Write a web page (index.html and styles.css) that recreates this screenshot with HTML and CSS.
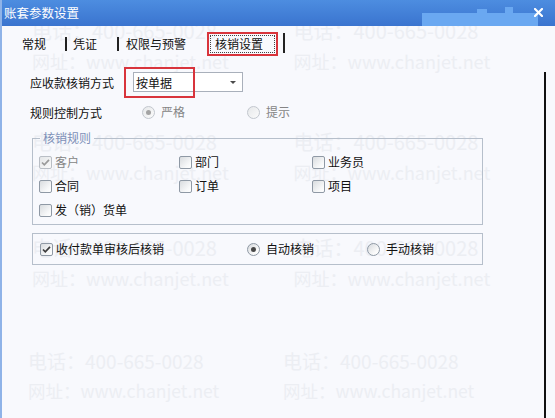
FILE: index.html
```html
<!DOCTYPE html>
<html lang="zh-CN">
<head>
<meta charset="utf-8">
<title>账套参数设置</title>
<link rel="stylesheet" href="styles.css">
</head>
<body>
<div class="window">
  <div class="titlebar">
    <span class="title">账套参数设置</span>
    <span class="blob"><i class="bump b1"></i><i class="bump b2"></i></span>
    <svg class="close" width="9" height="9" viewBox="0 0 9 9"><path d="M1 1 L8 8 M8 1 L1 8" stroke="#fff" stroke-width="2.2" stroke-linecap="square"/></svg>
  </div>

  <div class="wm">
    <div class="band band1">
      <div class="wm-col"><div>电话：400-665-0028</div><div class="url">网址：www.chanjet.net</div></div>
      <div class="wm-col"><div>电话：400-665-0028</div><div class="url">网址：www.chanjet.net</div></div>
    </div>
    <div class="band band2">
      <div class="wm-col"><div>电话：400-665-0028</div><div class="url">网址：www.chanjet.net</div></div>
      <div class="wm-col"><div>电话：400-665-0028</div><div class="url">网址：www.chanjet.net</div></div>
    </div>
    <div class="band band3">
      <div class="wm-col"><div>电话：400-665-0028</div><div class="url">网址：www.chanjet.net</div></div>
      <div class="wm-col"><div>电话：400-665-0028</div><div class="url">网址：www.chanjet.net</div></div>
    </div>
    <div class="band band4">
      <div class="wm-col"><div>电话：400-665-0028</div><div class="url">网址：www.chanjet.net</div></div>
      <div class="wm-col"><div>电话：400-665-0028</div><div class="url">网址：www.chanjet.net</div></div>
    </div>
  </div>

  <div class="tabs">
    <span class="tab t1">常规</span>
    <span class="tab t2">凭证</span>
    <span class="tab t3">权限与预警</span>
    <span class="tab active"><span class="focus">核销设置</span></span>
    <span class="tab-end"></span>
  </div>

  <div class="panel">
    <div class="row r1">
      <span class="label l1">应收款核销方式</span>
      <div class="select"><span>按单据</span><i class="arrow"></i></div>
      <span class="highlight"></span>
    </div>

    <div class="row r2">
      <span class="label l2">规则控制方式</span>
      <span class="opt disabled w105"><span class="rd on"></span>严格</span>
      <span class="opt disabled"><span class="rd"></span>提示</span>
    </div>

    <fieldset class="group">
      <legend>核销规则</legend>
      <div class="rules">
        <span class="opt disabled"><span class="cb on"><svg width="11" height="11" viewBox="0 0 11 11"><path d="M2 5.5 L4.3 7.8 L9 2.8" fill="none" stroke="#9a9a9a" stroke-width="1.7"/></svg></span>客户</span>
        <span class="opt"><span class="cb"></span>部门</span>
        <span class="opt"><span class="cb"></span>业务员</span>
        <span class="opt"><span class="cb"></span>合同</span>
        <span class="opt"><span class="cb"></span>订单</span>
        <span class="opt"><span class="cb"></span>项目</span>
        <span class="opt"><span class="cb"></span>发（销）货单</span>
      </div>
    </fieldset>

    <div class="group2">
      <span class="opt w207"><span class="cb on"><svg width="11" height="11" viewBox="0 0 11 11"><path d="M2 5.5 L4.3 7.8 L9 2.8" fill="none" stroke="#3c3c3c" stroke-width="1.7"/></svg></span>收付款单审核后核销</span>
      <span class="opt w120"><span class="rd on dark"></span>自动核销</span>
      <span class="opt"><span class="rd"></span>手动核销</span>
    </div>
  </div>
</div>
</body>
</html>
```

FILE: styles.css
```css
* { box-sizing: border-box; }
html, body { margin: 0; padding: 0; }
body {
  width: 555px;
  height: 418px;
  overflow: hidden;
  background: #f8f9fd;
  font-family: "Noto Sans CJK SC", "Noto Sans", sans-serif;
  font-size: 12px;
  color: #111;
}
.window {
  position: relative;
  width: 555px;
  height: 418px;
  border-left: 2px solid #8fb3e8;
}

/* title bar */
.titlebar {
  position: relative;
  z-index: 2;
  height: 26px;
  display: flex;
  align-items: center;
  padding-left: 2px;
  background: linear-gradient(#4d8de0, #3a74cf);
  color: #fff;
}
.title { font-size: 12.5px; line-height: 14px; }
.blob {
  position: absolute;
  left: 420px;
  top: 13px;
  width: 116px;
  height: 13px;
  background: #6aa8f1;
}
.bump { position: absolute; background: #6aa8f1; }
.b1 { left: 55px; top: -4px; width: 10px; height: 4px; }
.b2 { left: 83px; top: -6px; width: 8px; height: 6px; }
.close { position: relative; margin-left: auto; margin-right: 12px; margin-top: -2px; }

/* watermark layer */
.wm {
  position: absolute;
  left: 0;
  top: 0;
  width: 553px;
  height: 418px;
  z-index: 0;
  display: flex;
  flex-direction: column;
  color: #eceef3;
  font-size: 20px;
  font-weight: 400;
  line-height: 30px;
  white-space: nowrap;
}
.band { display: flex; padding-left: 30px; }
.wm-col { width: 271px; }
.url { font-size: 18px; }
.band1 { margin-top: 16px; }
.band2 { margin-top: 51px; }
.band3 { margin-top: 46px; }
.band4 { margin-top: 53px; padding-left: 26px; font-size: 19px; }
.band4 .url { font-size: 17.5px; }
.band4 .wm-col { width: 255px; }

/* tabs */
.tabs {
  position: relative;
  z-index: 1;
  display: flex;
  align-items: flex-start;
  height: 27px;
  padding-left: 20px;
}
.tab { margin-top: 11px; line-height: 14px; height: 14px; }
.t1 { padding-right: 19px; border-right: 2px solid #222; }
.t2 { padding-left: 6px; padding-right: 20px; border-right: 2px solid #222; }
.t3 { padding-left: 7px; }
.active {
  height: auto;
  margin-left: 21px;
  margin-top: 6px;
  margin-bottom: -4px;
  border: 2px solid #d8343c;
  padding: 1px;
  line-height: 14px;
}
.focus {
  display: block;
  border: 1px dotted #444;
  padding: 1px 11px 1px 4px;
}
.tab-end {
  margin-left: 5px;
  margin-top: 7px;
  width: 2px;
  height: 20px;
  background: #222;
}

/* panel */
.panel {
  position: relative;
  z-index: 1;
  margin-left: 10px;
  width: 534px;
  height: 362px;
  border-right: 2px solid #111;
  border-bottom: 2px solid #1a1a1a;
}
.row {
  position: relative;
  display: flex;
  align-items: center;
  height: 20px;
  padding-left: 18px;
}
.r1 { margin-top: 19px; }
.r2 { margin-top: 10px; }
.l1 { width: 103px; }
.l2 { width: 112px; }
.select {
  width: 110px;
  height: 20px;
  border: 1px solid #a9b0bb;
  background: #fff;
  display: flex;
  align-items: center;
  padding-left: 2px;
}
.arrow {
  margin-left: auto;
  margin-right: 6px;
  width: 0;
  height: 0;
  border-left: 3px solid transparent;
  border-right: 3px solid transparent;
  border-top: 3px solid #4a4a4a;
}
.highlight {
  position: absolute;
  left: 112px;
  top: -5px;
  width: 71px;
  height: 31px;
  border: 2px solid #d8343c;
}

/* options */
.opt { display: flex; align-items: center; gap: 3px; white-space: nowrap; line-height: 14px; }
.r2 .opt, .group2 .opt:not(.w207) { gap: 6px; }
.disabled { color: #858585; }
.w105 { width: 105px; }
.w207 { width: 207px; }
.w120 { width: 120px; }

.cb {
  flex: none;
  width: 13px;
  height: 13px;
  border: 1px solid #8f99a5;
  border-radius: 2px;
  background: linear-gradient(135deg, #d9dcdf, #f7f8f9 70%, #fff);
  display: flex;
  align-items: center;
  justify-content: center;
}
.disabled .cb { border-color: #b9bec5; background: linear-gradient(135deg, #e4e6e8, #fafafa); }
.cb svg { display: block; }

.rd {
  flex: none;
  position: relative;
  width: 13px;
  height: 13px;
  border: 1px solid #8f99a5;
  border-radius: 50%;
  background: linear-gradient(135deg, #d6d9dd, #fafafa 70%, #fff);
}
.disabled .rd { border-color: #c2c7ce; background: linear-gradient(135deg, #e6e8ea, #fbfbfb); }
.rd.on::after {
  content: "";
  position: absolute;
  left: 3px;
  top: 3px;
  width: 5px;
  height: 5px;
  border-radius: 50%;
  background: #a3a3a3;
}
.rd.dark::after { background: #474747; }

/* group boxes */
.group {
  margin: 9px 0 0 20px;
  width: 451px;
  min-width: 0;
  border: 1px solid #b6bfcb;
  padding: 5px 0 2px 6px;
}
.group legend {
  margin-left: 1px;
  padding: 0 3px;
  line-height: 14px;
  color: #7d90b8;
}
.rules {
  display: grid;
  grid-template-columns: 140px 133px 1fr;
  grid-auto-rows: 24px;
  align-items: center;
}
.group2 {
  margin: 8px 0 0 20px;
  width: 451px;
  height: 32px;
  border: 1px solid #b6bfcb;
  display: flex;
  align-items: center;
  padding-left: 7px;
}
```
